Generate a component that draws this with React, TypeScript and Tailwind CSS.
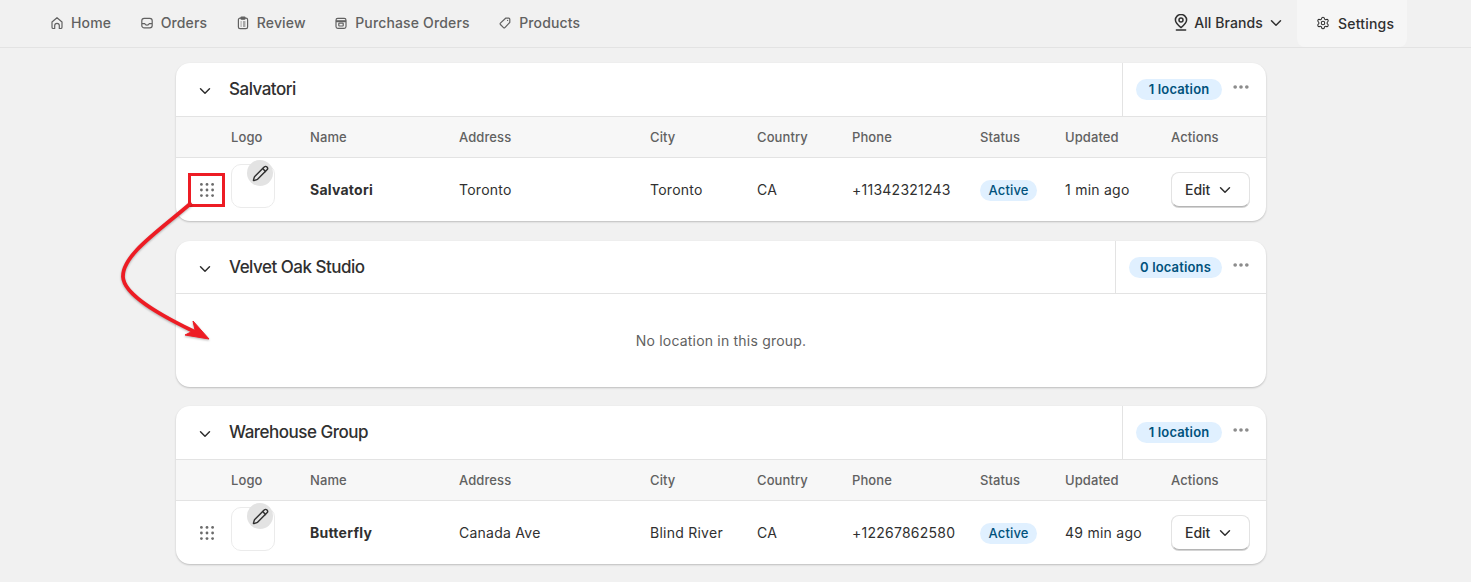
import React from 'react';
import { ChevronDown, Ellipsis, Settings, Pencil } from 'lucide-react';

const COLS = 'grid grid-cols-[55px_79px_149px_191px_107px_95px_128px_85px_106px_95px] items-center';

function HomeIcon() {
  return (
    <svg width="14" height="14" viewBox="0 0 14 14" fill="none" stroke="#616161" strokeWidth="1.2" strokeLinejoin="round">
      <path d="M2 6 7 1.7 12 6v5.2c0 .8-.5 1.3-1.3 1.3H9.3V9.6a2.3 2.3 0 0 0-4.6 0v2.9H3.3c-.8 0-1.3-.5-1.3-1.3z" />
    </svg>
  );
}

function OrdersIcon() {
  return (
    <svg width="14" height="14" viewBox="0 0 14 14" fill="none" stroke="#616161" strokeWidth="1.2" strokeLinejoin="round">
      <rect x="1.8" y="2.4" width="10.4" height="9.4" rx="2.4" />
      <path d="M2 7.6h2.8c.3 1 1.1 1.5 2.2 1.5s1.9-.5 2.2-1.5H12" />
    </svg>
  );
}

function ReviewIcon() {
  return (
    <svg width="14" height="14" viewBox="0 0 14 14" fill="none" stroke="#616161" strokeWidth="1.2" strokeLinejoin="round">
      <rect x="2.4" y="2.2" width="9.2" height="10.4" rx="1.6" />
      <rect x="5" y="1.2" width="4" height="2" rx=".6" fill="#616161" />
      <path d="M4.6 6h1M7 6h2.4M4.6 8h1M7 8h2.4M4.6 10h1M7 10h2.4" />
    </svg>
  );
}

function PurchaseIcon() {
  return (
    <svg width="14" height="14" viewBox="0 0 14 14" fill="none" stroke="#616161" strokeWidth="1.2" strokeLinejoin="round">
      <rect x="2" y="2.4" width="10" height="10" rx="1.8" />
      <path d="M2 5.2h10" strokeWidth="2" />
      <rect x="4.8" y="7.2" width="4.4" height="2.8" rx=".4" />
    </svg>
  );
}

function TagIcon() {
  return (
    <svg width="14" height="14" viewBox="0 0 14 14" fill="none" stroke="#616161" strokeWidth="1.2" strokeLinejoin="round">
      <path d="M7.6 2.2h3.2c.6 0 1 .4 1 1v3.2L6.9 11.6c-.4.4-1 .4-1.4 0L2.4 8.5c-.4-.4-.4-1 0-1.4z" />
      <circle cx="9.6" cy="4.4" r=".6" fill="#616161" stroke="none" />
    </svg>
  );
}

function PinIcon() {
  return (
    <svg width="14" height="17" viewBox="0 0 14 17" fill="none" stroke="#303030" strokeWidth="1.5" strokeLinejoin="round" strokeLinecap="round">
      <path d="M7 13.6C4 11.2 1.4 9 1.4 6.1a5.6 5.6 0 0 1 11.2 0C12.6 9 10 11.2 7 13.6z" />
      <circle cx="7" cy="6" r="2" />
      <path d="M2.4 15.9h9.2" />
    </svg>
  );
}

function GripIcon() {
  return (
    <svg width="14" height="14" viewBox="0 0 14 14" fill="#6b6b6b" className="block">
      {[1.4, 7, 12.6].map((y) =>
        [1.4, 7, 12.6].map((x) => <circle key={`${x}-${y}`} cx={x} cy={y} r="1.4" />)
      )}
    </svg>
  );
}

function NavLink({ icon, label }: { icon: React.ReactNode; label: string }) {
  return (
    <a className="flex items-center gap-[7px] text-[14px] font-medium tracking-[0.15px] text-[#616161]">
      {icon}
      <span>{label}</span>
    </a>
  );
}

function GroupHeader({ title, badge, badgeWidth, tall = true }: { title: string; badge: string; badgeWidth: string; tall?: boolean }) {
  return (
    <div className={`flex items-stretch ${tall ? 'h-[53px]' : 'h-[52px]'}`}>
      <div className="flex flex-1 items-center pl-[20px] pt-[1px]">
        <ChevronDown size={18} strokeWidth={2} className="mt-[2px] text-[#303030]" />
        <h2 className="ml-[15px] text-[17px] font-[550] tracking-[-0.5px] text-[#303030]">{title}</h2>
      </div>
      <div className="flex items-center border-l border-[#e3e3e3] pl-[13px] pr-[15px]">
        <span className={`${badgeWidth} rounded-full bg-[#e0f0ff] py-[3px] text-center text-[13px] leading-[15px] font-semibold tracking-[0.15px] whitespace-nowrap text-[#00527c]`}>
          {badge}
        </span>
        <Ellipsis size={20} strokeWidth={2.4} className="-mt-[5px] ml-[9px] text-[#8a8a8a]" />
      </div>
    </div>
  );
}

function LocationTable({ name, address, city, phone, updated }: { name: string; address: string; city: string; phone: string; updated: string }) {
  return (
    <>
      <div className={`${COLS} h-[42px] border-y border-[#e3e3e3] bg-[#f7f7f7] pt-[2px] text-[13px] font-medium tracking-[0.1px] text-[#616161]`}>
        <span />
        <span>Logo</span>
        <span>Name</span>
        <span>Address</span>
        <span>City</span>
        <span>Country</span>
        <span>Phone</span>
        <span>Status</span>
        <span>Updated</span>
        <span>Actions</span>
      </div>
      <div className={`${COLS} h-[63px] text-[14px] tracking-[0.25px] text-[#303030]`}>
        <span className="pl-[24px]"><GripIcon /></span>
        <div className="relative -mt-[7px] h-[44px] w-[44px] rounded-[10px] border border-[#ebebeb]">
          <span className="absolute -top-[5px] left-[15px] flex h-[26px] w-[26px] items-center justify-center rounded-full bg-[#e3e3e3]">
            <Pencil size={17} strokeWidth={2} className="text-[#303030]" />
          </span>
        </div>
        <span className="font-bold">{name}</span>
        <span>{address}</span>
        <span>{city}</span>
        <span>CA</span>
        <span>{phone}</span>
        <span>
          <span className="inline-block rounded-full bg-[#e0f0ff] px-[8.5px] py-[3px] text-[13px] leading-[15px] font-medium tracking-[0.15px] text-[#00527c]">Active</span>
        </span>
        <span>{updated}</span>
        <button className="flex h-[35px] w-[79px] items-center gap-[6px] rounded-[8px] border border-[#e3e3e3] border-b-[#b5b5b5] bg-white pb-[1px] pl-[13px] text-[14px] font-medium tracking-normal text-[#303030] shadow-[0_1px_0_#d4d4d4]">
          Edit
          <ChevronDown size={18} strokeWidth={2} className="mt-[1px]" />
        </button>
      </div>
    </>
  );
}

function Card({ children, className = '' }: { children: React.ReactNode; className?: string }) {
  return <section className={`overflow-hidden rounded-[14px] bg-white shadow-[0_1px_2px_rgba(0,0,0,0.22)] ${className}`}>{children}</section>;
}

export default function App() {
  return (
    <div className="relative h-[582px] w-[1471px] overflow-hidden bg-[#f1f1f1] font-['Inter',sans-serif]">
      <header className="flex h-[48px] items-stretch border-b border-[#e3e3e3] pl-[50px] pr-[64px]">
        <nav className="-mt-[2px] flex flex-1 items-center gap-[28.5px]">
          <NavLink icon={<HomeIcon />} label="Home" />
          <NavLink icon={<OrdersIcon />} label="Orders" />
          <NavLink icon={<ReviewIcon />} label="Review" />
          <NavLink icon={<PurchaseIcon />} label="Purchase Orders" />
          <NavLink icon={<TagIcon />} label="Products" />
        </nav>
        <div className="-mt-[2px] flex items-center gap-[6px] pr-[12px] text-[14px] font-medium tracking-[0.1px] text-[#303030]">
          <PinIcon />
          <span>All Brands</span>
          <ChevronDown size={18} strokeWidth={2} className="-ml-[2px]" />
        </div>
        <a className="flex w-[110px] items-center gap-[8px] rounded-b-[8px] bg-[#f6f6f6] pb-[1px] pl-[19px] text-[14px] font-medium tracking-[0.2px] text-[#303030]">
          <Settings size={14} strokeWidth={1.8} />
          Settings
        </a>
      </header>

      <main className="ml-[176px] mt-[15px] flex w-[1090px] flex-col gap-[19px]">
        <Card>
          <GroupHeader title="Salvatori" badge="1 location" badgeWidth="w-[86px]" />
          <LocationTable name="Salvatori" address="Toronto" city="Toronto" phone="+11342321243" updated="1 min ago" />
        </Card>
        <Card className="mt-[1px]">
          <GroupHeader title="Velvet Oak Studio" badge="0 locations" badgeWidth="w-[93px]" tall={false} />
          <div className="flex h-[94px] items-center justify-center border-t border-[#e3e3e3] text-[14px] tracking-[0.2px] text-[#616161]">
            No location in this group.
          </div>
        </Card>
        <Card>
          <GroupHeader title="Warehouse Group" badge="1 location" badgeWidth="w-[86px]" />
          <LocationTable name="Butterfly" address="Canada Ave" city="Blind River" phone="+12267862580" updated="49 min ago" />
        </Card>
      </main>

      {/* annotation drawn over the page */}
      <div className="absolute left-[188px] top-[173px] h-[34px] w-[37px] border-[3px] border-[#ed1c24]" />
      <svg className="absolute left-0 top-0 drop-shadow-[0_1px_1px_rgba(0,0,0,0.3)]" width="260" height="360" fill="none">
        <path d="M190 204C160 230 122 255 123 277C124 295 160 315 193 331" stroke="#ed1c24" strokeWidth="3.8" strokeLinecap="round" />
        <path d="M209 339 193 321 195 330 185 335Z" fill="#ed1c24" stroke="#ed1c24" strokeWidth="1" strokeLinejoin="round" />
      </svg>
    </div>
  );
}
